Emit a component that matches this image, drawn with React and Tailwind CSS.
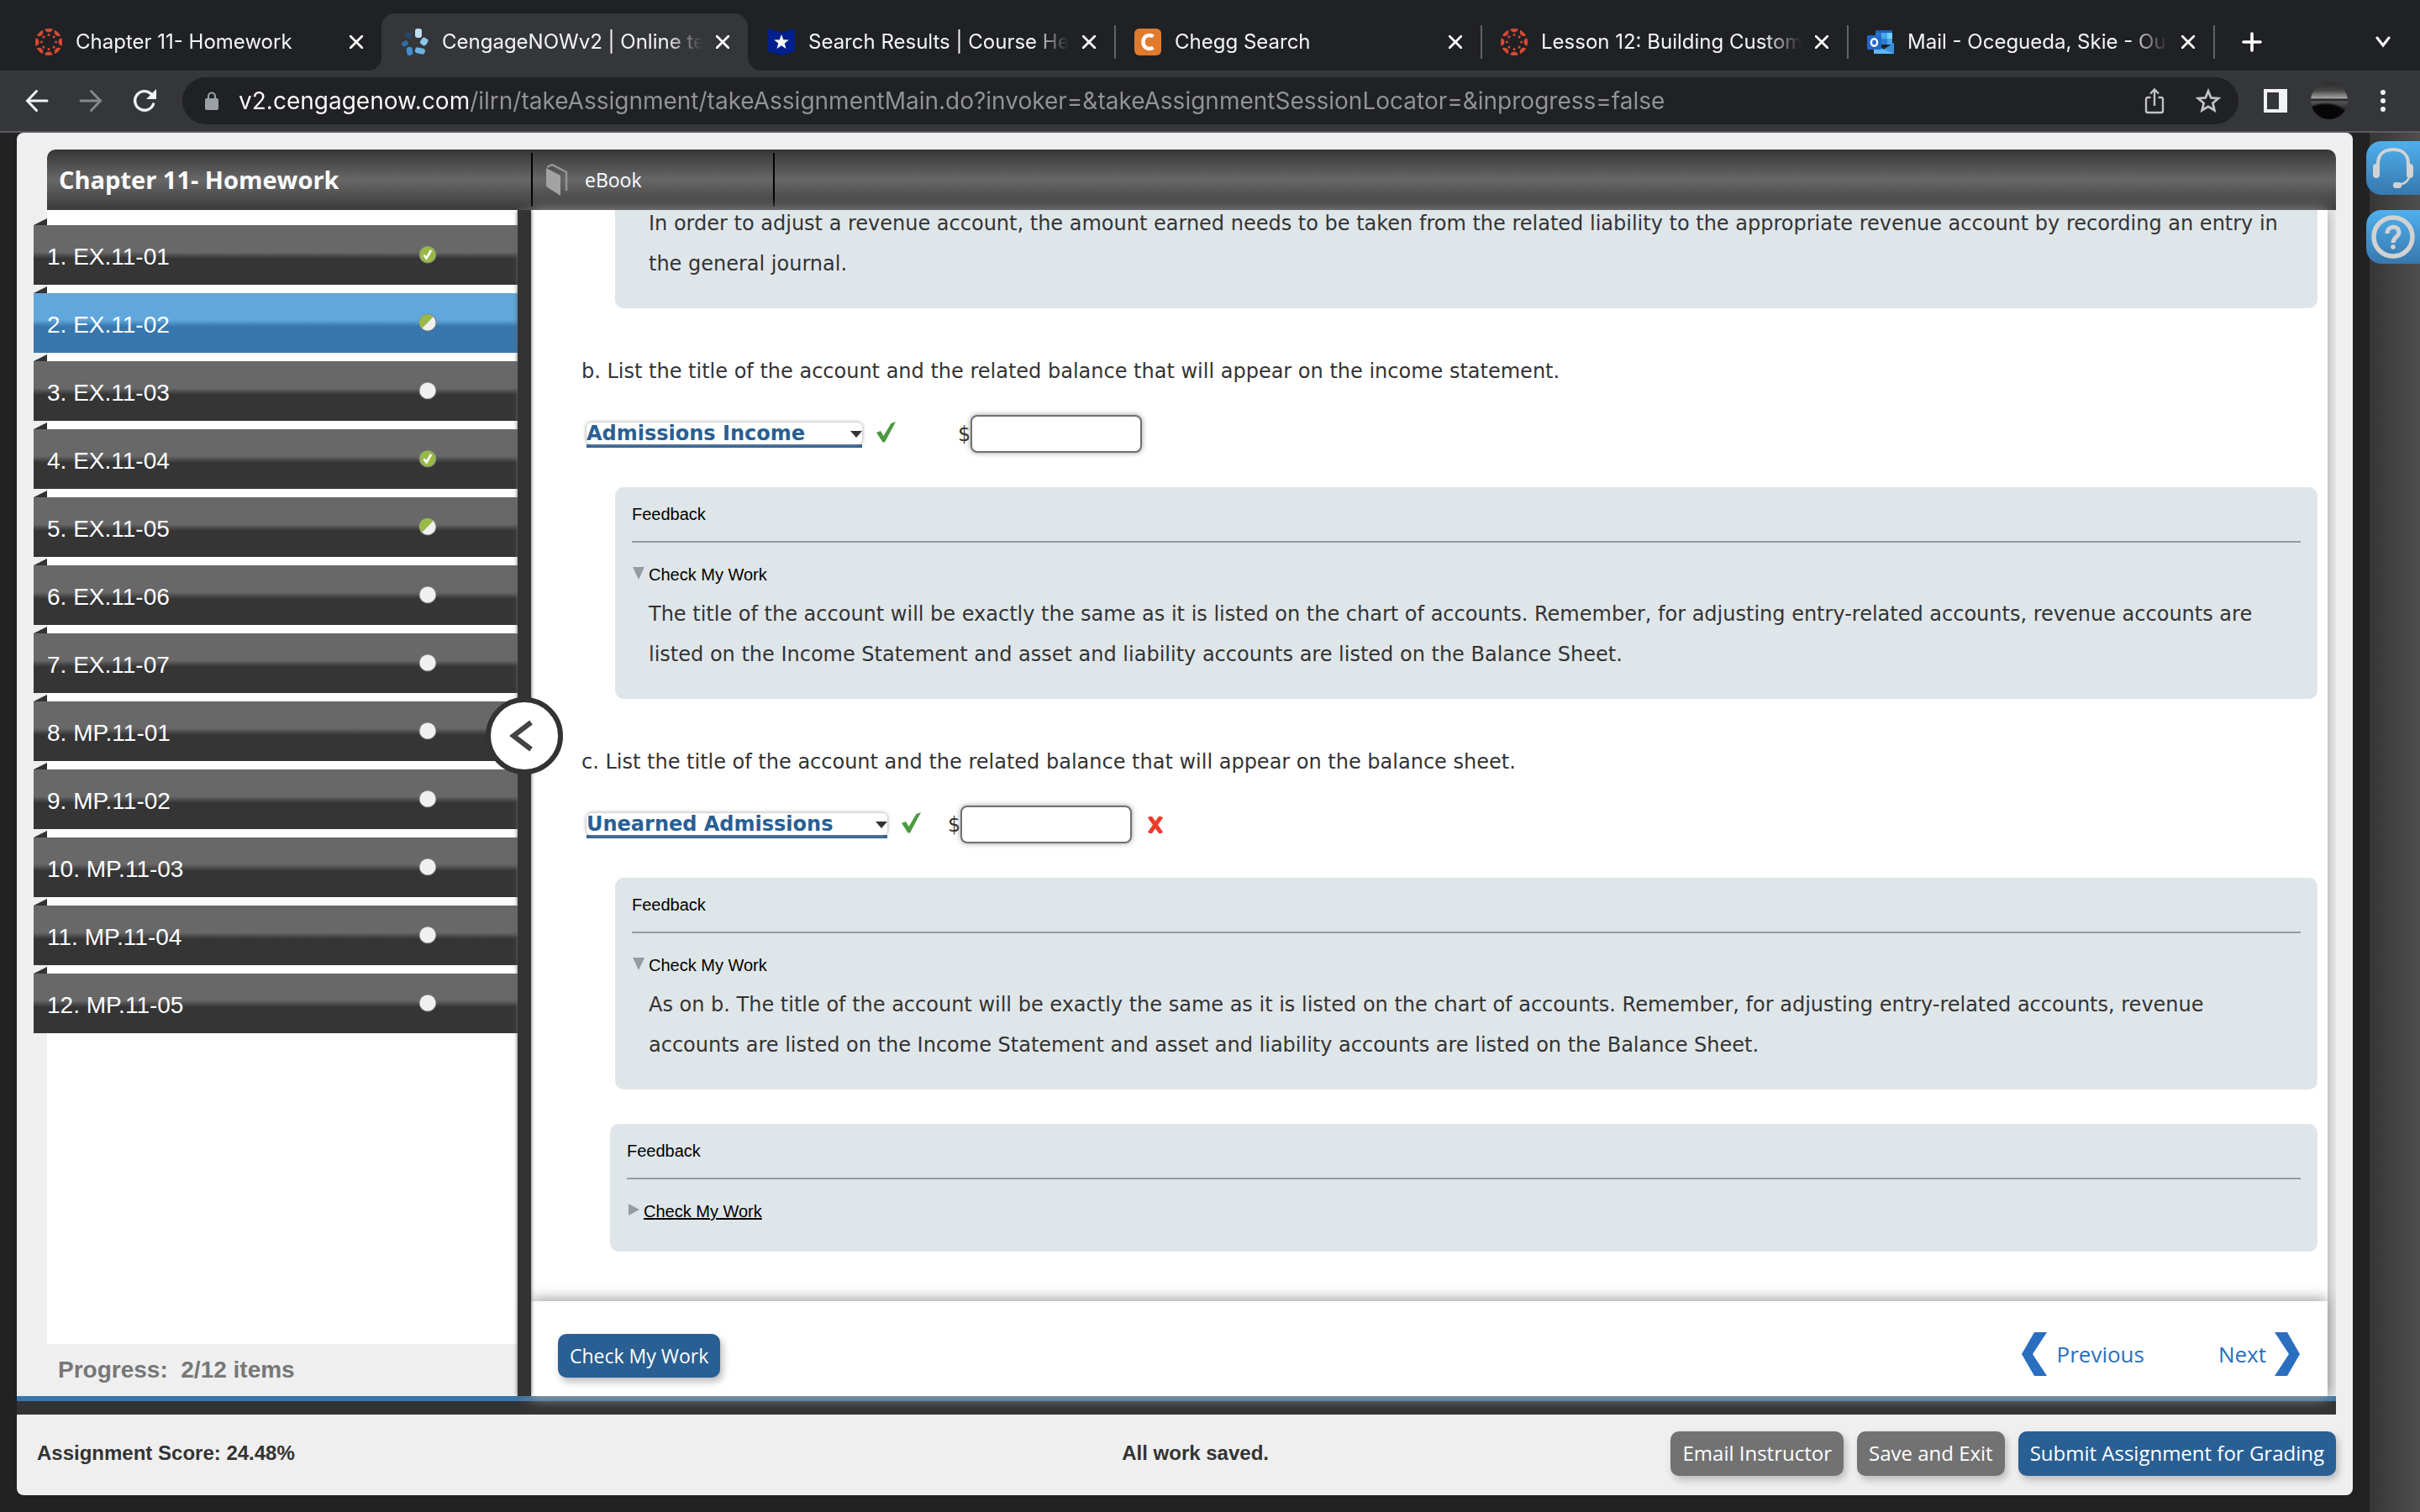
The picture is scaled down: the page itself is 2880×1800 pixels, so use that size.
import React from "react"
import clsx from "clsx"

const tabs = [
  { title: "Chapter 11- Homework", icon: "canvas" },
  { title: "CengageNOWv2 | Online te", icon: "cengage", active: true },
  { title: "Search Results | Course He", icon: "hero" },
  { title: "Chegg Search", icon: "chegg", divider: true },
  { title: "Lesson 12: Building Custom", icon: "canvas", divider: true },
  { title: "Mail - Ocegueda, Skie - Ou", icon: "outlook", divider: true },
]

const items = [
  { name: "EX.11-01", status: "done" },
  { name: "EX.11-02", status: "partial", current: true },
  { name: "EX.11-03", status: "none" },
  { name: "EX.11-04", status: "done" },
  { name: "EX.11-05", status: "partial" },
  { name: "EX.11-06", status: "none" },
  { name: "EX.11-07", status: "none" },
  { name: "MP.11-01", status: "none" },
  { name: "MP.11-02", status: "none" },
  { name: "MP.11-03", status: "none" },
  { name: "MP.11-04", status: "none" },
  { name: "MP.11-05", status: "none" },
]

const angles = [0, 45, 90, 135, 180, 225, 270, 315]

const CanvasIcon = () => (
  <svg viewBox="0 0 32 32" className="size-8" fill="#d64a35">
    <clipPath id="canvas-round">
      <circle cx="16" cy="16" r="16" />
    </clipPath>
    {angles.map((a) => (
      <g key={a} transform={`rotate(${a} 16 16)`}>
        <circle cx="16" cy="-0.5" r="5" clipPath="url(#canvas-round)" />
        <circle cx="16" cy="7.4" r="1.5" />
      </g>
    ))}
  </svg>
)

const CengageIcon = () => (
  <svg viewBox="0 0 32 32" className="size-8">
    <rect x="16" y="0" width="8" height="11" rx="3" fill="#bfe0f2" />
    <rect x="23" y="11" width="8" height="9" rx="3" fill="#8cc6e8" transform="rotate(35 27 15)" />
    <rect x="16" y="23" width="12" height="7" rx="3" fill="#69b3e0" transform="rotate(12 22 26)" />
    <rect x="6" y="22" width="7" height="10" rx="3" fill="#3f8fcf" transform="rotate(-8 9 27)" />
    <rect x="0" y="15" width="8" height="6" rx="3" fill="#2f6ca8" transform="rotate(-35 4 18)" />
    <rect x="5" y="5" width="7" height="6" rx="2" fill="#27476e" transform="rotate(20 8 8)" />
  </svg>
)

const HeroIcon = () => (
  <svg viewBox="0 0 32 32" className="size-8">
    <path d="M0 0l16 5L32 0v27l-16 5-16-5z" fill="#00208f" />
    <path d="M16 7l2.3 6.2 6.5.3-5.1 4.1 1.8 6.4-5.500-3.7-5.500 3.7 1.8-6.4-5.1-4.1 6.500-.3z" fill="#fff" />
  </svg>
)

const CheggIcon = () => (
  <svg viewBox="0 0 32 32" className="size-8">
    <rect width="32" height="32" rx="6" fill="#e07a2d" />
    <path d="M22.500 9.500c-5-3.500-12-0.500-12 6.500s7 10 12 6.500" fill="none" stroke="#fff" strokeWidth="4.500" />
  </svg>
)

const OutlookIcon = () => (
  <svg viewBox="0 0 32 32" className="size-8">
    <rect x="10" y="2" width="20" height="17" fill="#1b60b8" />
    <rect x="10" y="5" width="7" height="7" fill="#2a74c9" />
    <rect x="17" y="5" width="7" height="7" fill="#4aa6ea" />
    <rect x="24" y="5" width="6" height="7" fill="#6fd0ff" />
    <rect x="17" y="12" width="7" height="7" fill="#2b7fd3" />
    <rect x="24" y="12" width="6" height="7" fill="#4aa6ea" />
    <path d="M8 17l12 8 12-8v13H8z" fill="#5db7f0" />
    <path d="M32 17v13L20 24.500z" fill="#3b8edb" />
    <rect y="8" width="17" height="17" rx="1.500" fill="#2468c8" />
    <ellipse cx="8.500" cy="16.500" rx="3.600" ry="4.200" fill="none" stroke="#fff" strokeWidth="2.400" />
  </svg>
)

const tabIcons = {
  canvas: CanvasIcon,
  cengage: CengageIcon,
  hero: HeroIcon,
  chegg: CheggIcon,
  outlook: OutlookIcon,
}

const CloseIcon = () => (
  <svg viewBox="0 0 16 16" className="size-4" stroke="#fff" strokeWidth="2.800" strokeLinecap="round">
    <path d="M1 1l14 14M15 1L1 15" />
  </svg>
)

const Tab = ({ tab }) => {
  const Icon = tabIcons[tab.icon]
  return (
    <div
      className={clsx(
        "relative flex h-17 w-[436px] shrink-0 items-center pl-6",
        tab.active && "rounded-t-2xl bg-[#35363a]"
      )}
    >
      {tab.divider && <span className="absolute left-0 h-10 w-0.5 bg-[#5f6368]" />}
      {tab.active && (
        <>
          <span className="absolute bottom-0 -left-4 size-4 bg-[radial-gradient(circle_at_0_0,#202124_16px,#35363a_16px)]" />
          <span className="absolute -right-4 bottom-0 size-4 bg-[radial-gradient(circle_at_100%_0,#202124_16px,#35363a_16px)]" />
        </>
      )}
      <Icon />
      <span className="ml-4 w-[310px] mask-r-from-86% mask-r-to-100% text-2xl whitespace-nowrap text-[#f4f5f6]">
        {tab.title}
      </span>
      <button aria-label="Close tab" className="ml-4">
        <CloseIcon />
      </button>
    </div>
  )
}

const BrowserBar = () => (
  <header className="bg-[#202124] font-[Inter,sans-serif]">
    <div className="flex items-center pt-4 pr-[34px] pl-[18px]">
      {tabs.map((tab) => (
        <Tab key={tab.title} tab={tab} />
      ))}
      <span className="h-10 w-0.5 bg-[#5f6368]" />
      <button aria-label="New tab" className="ml-8">
        <svg viewBox="0 0 24 24" className="size-6" stroke="#fff" strokeWidth="3.600" strokeLinecap="round">
          <path d="M12 2v20M2 12h20" />
        </svg>
      </button>
      <button aria-label="Search tabs" className="ml-auto">
        <svg viewBox="0 0 20 14" className="h-3.5 w-5" fill="none" stroke="#fff" strokeWidth="3" strokeLinecap="round">
          <path d="M3 2l7 9 7-9" />
        </svg>
      </button>
    </div>
    <div className="flex h-[74px] items-center border-b-2 border-[#5b5c60] bg-[#35363a] pr-7 pl-3">
      <button aria-label="Back" className="flex w-16 justify-center">
        <svg viewBox="0 0 28 28" className="size-7" fill="none" stroke="#f1f3f4" strokeWidth="3" strokeLinecap="round">
          <path d="M26 14H3M13.500 2.500L2.500 14l11 11.500" />
        </svg>
      </button>
      <button aria-label="Forward" className="flex w-16 justify-center">
        <svg viewBox="0 0 28 28" className="size-7" fill="none" stroke="#86878a" strokeWidth="3" strokeLinecap="round">
          <path d="M2 14h23M14.500 2.500L25.500 14l-11 11.500" />
        </svg>
      </button>
      <button aria-label="Reload" className="flex w-16 justify-center">
        <svg viewBox="0 0 28 28" className="size-7" fill="none" stroke="#f1f3f4" strokeWidth="3.400" strokeLinecap="round">
          <path d="M24.500 18A11.300 11.300 0 1 1 22 6" />
          <path d="M28 0v12H16z" fill="#f1f3f4" stroke="none" />
        </svg>
      </button>
      <div className="ml-[13px] flex h-14 flex-1 items-center gap-6 rounded-full bg-[#202124] pr-5 pl-[27px]">
        <svg viewBox="0 0 16 22" className="h-[22px] w-4">
          <rect y="8" width="16" height="14" rx="2" fill="#9aa0a6" />
          <path d="M4 9V5.500a4 4 0 0 1 8 0V9" fill="none" stroke="#9aa0a6" strokeWidth="2.200" />
        </svg>
        <input
          aria-label="Address"
          defaultValue="v2.cengagenow.com/ilrn/takeAssignment/takeAssignmentMain.do?invoker=&takeAssignmentSessionLocator=&inprogress=false"
          className="h-12 flex-1 bg-[linear-gradient(to_right,#ffffff_274px,#929497_274px)] bg-clip-text text-[28px] text-transparent outline-none"
        />
        <button aria-label="Share" className="flex w-8 justify-center">
          <svg viewBox="0 0 24 32" className="h-8 w-6" fill="none" stroke="#c0c1c3" strokeWidth="2.400">
            <path d="M7.500 12H4a2 2 0 0 0-2 2v14a2 2 0 0 0 2 2h16a2 2 0 0 0 2-2V14a2 2 0 0 0-2-2h-3.500M12 22V3M7 7.500L12 2.500l5 5" />
          </svg>
        </button>
        <button aria-label="Bookmark" className="ml-2 flex w-8 justify-center">
          <svg viewBox="0 0 32 32" className="size-8" fill="none" stroke="#c0c1c3" strokeWidth="2.800">
            <path d="M16 4.500l3.300 8 8.700.7-6.600 5.600 2 8.500-7.400-4.500-7.400 4.500 2-8.500L4 13.200l8.700-.7z" />
          </svg>
        </button>
      </div>
      <button aria-label="Side panel" className="ml-[30px]">
        <svg viewBox="0 0 28 28" className="size-7">
          <path d="M0 0h28v28H0zM4 4v20h14V4z" fill="#f1f3f4" fillRule="evenodd" />
        </svg>
      </button>
      <button
        aria-label="Profile"
        className="ml-7 size-11 rounded-full bg-[radial-gradient(30px_20px_at_40%_100%,#060606_85%,transparent_100%),linear-gradient(to_bottom,#2b2b2b_0%,#444444_22%,#a0a0a0_42%,#1a1a1a_47%,#555555_52%,#2a2a2a_72%,#0a0a0a_100%)]"
      />
      <button aria-label="Menu" className="ml-6.5 flex w-8 justify-center">
        <svg viewBox="0 0 8 28" className="h-7 w-2" fill="#f1f3f4">
          <circle cx="4" cy="4" r="3" />
          <circle cx="4" cy="14" r="3" />
          <circle cx="4" cy="24" r="3" />
        </svg>
      </button>
    </div>
  </header>
)

const StatusDot = ({ status }) => (
  <svg viewBox="0 0 22 22" className="size-[22px]">
    <circle cx="11" cy="11" r="10.500" fill="#7d7d7d" />
    <circle cx="11" cy="11" r="9.500" fill={status === "done" ? "#98b94a" : "#f0f0f0"} />
    {status === "done" && (
      <path d="M6.500 11.500l3 4L15 6" fill="none" stroke="#fff" strokeWidth="2.600" />
    )}
    {status === "partial" && <path d="M17.700 4.300A9.500 9.500 0 1 0 4.300 17.700z" fill="#98b94a" />}
  </svg>
)

const Sidebar = () => (
  <aside className="flex w-[596px] shrink-0 flex-col pl-5">
    <nav className="ml-4 flex-1 bg-white pt-[18px]">
      <ul className="flex flex-col gap-2.5">
        {items.map((item, i) => (
          <li key={item.name} className="relative -ml-4">
            <span className="absolute -top-2 left-0 h-2 w-4 bg-[#333333] [clip-path:polygon(100%_0,100%_100%,0_100%)]" />
            <a
              href="#"
              className={clsx(
                "flex h-[71px] items-center justify-between pr-24 pb-0.5 pl-4 text-[28px] text-white",
                item.current
                  ? "bg-[linear-gradient(to_bottom,#60a7dc_45%,#3777ad_56%)]"
                  : "bg-[linear-gradient(to_bottom,#686868_45%,#353535_56%)]"
              )}
            >
              <span className="pt-1.5">
                {i + 1}. {item.name}
              </span>
              <StatusDot status={item.status} />
            </a>
          </li>
        ))}
      </ul>
    </nav>
    <p className="flex h-[62px] items-center pl-[29px] text-[28px] font-bold whitespace-pre text-[#777777]">
      Progress:  2/12 items
    </p>
  </aside>
)

const CheckMark = () => (
  <svg viewBox="0 0 24 26" className="h-[26px] w-6 shrink-0">
    <path d="M1 13l5-2 3.500 6L18.500 2 24 0 11 24.500H8.500z" fill="#4b9a3f" />
  </svg>
)

const AnswerRow = ({ label, account, selectClass, amountClass, wrong }) => (
  <div className="mt-7 ml-[66px] flex h-[45px] items-center">
    <div className={clsx("relative mt-0.5 border-b-4 border-[#2f5f93]", selectClass)}>
      <select
        aria-label={`${label} account title`}
        className="block h-[26px] w-full appearance-none rounded-md bg-white text-[24px] leading-[26px] font-bold text-[#295f93] shadow-[0_0_5px_#999999]"
      >
        <option>{account}</option>
      </select>
      <svg viewBox="0 0 14 8" className="pointer-events-none absolute top-2.5 right-0 h-2 w-3.5" fill="#333333">
        <path d="M0 0h14L7 8z" />
      </svg>
    </div>
    <span className="ml-4 pb-1">
      <CheckMark />
    </span>
    <label className={clsx("flex items-center", amountClass)}>
      $
      <input
        aria-label={`${label} amount`}
        className="h-[45px] w-[204px] rounded-lg border-2 border-[#707070] bg-white px-2 shadow-[0_0_6px_#999999] outline-none"
      />
    </label>
    {wrong && (
      <svg viewBox="0 0 20 20" className="ml-[18px] size-5" stroke="#ee3a2c" strokeWidth="5">
        <path d="M3 0l14 20M17 0L3 20" />
      </svg>
    )}
  </div>
)

const Feedback = ({ className, children }) => (
  <section
    className={clsx(
      "mt-[41px] mr-3 rounded-[10px] bg-[#dfe6e9] px-5 pt-5 font-['Liberation_Sans',Arial,sans-serif] text-[20px] leading-6 text-black",
      className
    )}
  >
    <h3>Feedback</h3>
    <hr className="mt-5 border-t-2 border-[#969ba0]" />
    <button className="mt-[26px] flex items-center">
      <svg viewBox="0 0 16 16" className="mr-1 mb-1 size-4" fill="#969b9f">
        <path d={children ? "M1 1h14L8 16z" : "M2 1l13 7-13 7z"} />
      </svg>
      <span className={children ? "" : "underline"}>Check My Work</span>
    </button>
    {children && (
      <p className="mt-[11px] pl-5 font-['DejaVu_Sans',Verdana,sans-serif] text-[24px] leading-[48px] text-[#333333]">
        {children}
      </p>
    )}
  </section>
)

const Question = ({ children }) => <p className="mt-[51px] ml-[60px] leading-[48px]">{children}</p>

const Assignment = () => (
  <main className="relative flex min-w-0 flex-1 flex-col bg-white font-['DejaVu_Sans',Verdana,sans-serif] text-[24px] text-[#333333] shadow-[0_0_16px_#999999]">
    <div className="min-h-0 flex-1 basis-0 overflow-hidden">
      <div className="-mt-10 mr-3 ml-[100px] rounded-[10px] bg-[#dfe6e9] pt-8 pr-5 pb-[29px] pl-10 leading-[48px]">
        In order to adjust a revenue account, the amount earned needs to be taken from the related liability to the
        appropriate revenue account by recording an entry in the general journal.
      </div>
      <Question>
        b. List the title of the account and the related balance that will appear on the income statement.
      </Question>
      <AnswerRow label="Part b" account="Admissions Income" selectClass="w-[328px]" amountClass="ml-[74px]" />
      <Feedback className="ml-[100px] pb-[29px]">
        The title of the account will be exactly the same as it is listed on the chart of accounts. Remember, for
        adjusting entry-related accounts, revenue accounts are listed on the Income Statement and asset and liability
        accounts are listed on the Balance Sheet.
      </Feedback>
      <Question>
        c. List the title of the account and the related balance that will appear on the balance sheet.
      </Question>
      <AnswerRow label="Part c" account="Unearned Admissions" selectClass="w-[358px]" amountClass="ml-8" wrong />
      <Feedback className="ml-[100px] pb-[29px]">
        As on b. The title of the account will be exactly the same as it is listed on the chart of accounts. Remember,
        for adjusting entry-related accounts, revenue accounts are listed on the Income Statement and asset and
        liability accounts are listed on the Balance Sheet.
      </Feedback>
      <Feedback className="ml-[94px] pb-9" />
    </div>
    <div className="relative flex h-[113px] shrink-0 items-start bg-white pt-[39px] pr-[33px] pl-8 font-['Open_Sans',sans-serif] shadow-[0_-2px_16px_#999999]">
      <button className="h-[52px] rounded-[10px] bg-[#295f93] px-3.5 text-[23px] text-white shadow-[3px_5px_8px_#bbbbbb]">
        Check My Work
      </button>
      <div className="ml-auto flex h-12 items-center text-[26px] text-[#2a6ebf]">
        <a href="#" className="flex items-center gap-3">
          <svg viewBox="0 0 30 52" className="h-13 w-[30px]" fill="#2a6ebf">
            <path d="M15 0h15L13 26l17 26H15L0 26z" />
          </svg>
          Previous
        </a>
        <a href="#" className="ml-[88px] flex items-center gap-2.5">
          Next
          <svg viewBox="0 0 30 52" className="h-13 w-[30px]" fill="#2a6ebf">
            <path d="M15 0H0l17 26L0 52h15l15-26z" />
          </svg>
        </a>
      </div>
    </div>
  </main>
)

const HelpRail = () => (
  <div className="flex w-[60px] shrink-0 flex-col gap-[18px] bg-[linear-gradient(to_right,#363636,#4e4e4e)] pt-2.5">
    <button
      aria-label="Support"
      className="-ml-1 flex h-16 items-center rounded-l-[18px] bg-[linear-gradient(to_bottom,#4fb0ee,#3777ad)] pl-2"
    >
      <svg viewBox="0 0 48 50" className="h-[50px] w-12 shrink-0" fill="none" stroke="#d2d2d2">
        <path d="M6 26V20C6 8 14 3 24 3s18 5 18 17v6" strokeWidth="4" />
        <path d="M43 36c-2 6-6 8-12 9" strokeWidth="2.500" />
        <rect x="0" y="20" width="8" height="17" rx="4" fill="#d2d2d2" stroke="none" />
        <rect x="40" y="20" width="8" height="17" rx="4" fill="#d2d2d2" stroke="none" />
        <rect x="24" y="42" width="10" height="7" rx="3" fill="#d2d2d2" stroke="none" />
      </svg>
    </button>
    <button
      aria-label="Help"
      className="-ml-1 flex h-16 items-center rounded-l-[18px] bg-[linear-gradient(to_bottom,#4fb0ee,#3777ad)] pl-1.5"
    >
      <svg viewBox="0 0 52 52" className="size-13 shrink-0" fill="none" stroke="#d2d2d2">
        <circle cx="26" cy="26" r="23" strokeWidth="5.500" />
        <path d="M19 22c0-10 14-10 14-1.500 0 6-7 5.500-7 12.500" strokeWidth="5" />
        <circle cx="26" cy="38" r="2.800" fill="#d2d2d2" stroke="none" />
      </svg>
    </button>
  </div>
)

const TitleBar = () => (
  <div className="ml-9 flex h-[72px] items-center rounded-t-[10px] bg-[linear-gradient(to_bottom,#363636,#676767_50%,#3a3a3a)] text-white">
    <h1 className="w-[576px] pl-3.5 font-['Open_Sans',sans-serif] text-[29px] font-bold">Chapter 11- Homework</h1>
    <button className="flex h-16 w-[290px] items-center border-x-2 border-black pl-4 font-['Open_Sans',sans-serif] text-[23px]">
      <svg viewBox="0 0 28 38" className="mr-[18px] h-[38px] w-7">
        <path d="M0 5l17 9v24L0 27z" fill="#a3a3a3" />
        <path d="M1 4l6-3 17 9v22" fill="none" stroke="#959595" strokeWidth="2.500" />
      </svg>
      eBook
    </button>
  </div>
)

const Footer = () => (
  <footer className="flex h-24 items-center pr-5 pb-1 text-[24px] font-bold text-[#333333]">
    <p className="flex-1 pl-6">Assignment Score: 24.48%</p>
    <p className="w-[196px] text-right whitespace-nowrap">All work saved.</p>
    <div className="flex flex-1 justify-end gap-4 font-['Open_Sans',sans-serif] font-normal text-white">
      <button className="h-[53px] rounded-[10px] bg-[#727272] px-3.5 shadow-[3px_5px_8px_#bbbbbb]">
        Email Instructor
      </button>
      <button className="h-[53px] rounded-[10px] bg-[#727272] px-3.5 shadow-[3px_5px_8px_#bbbbbb]">
        Save and Exit
      </button>
      <button className="h-[53px] rounded-[10px] bg-[#295f93] px-3.5 shadow-[3px_5px_8px_#bbbbbb]">
        Submit Assignment for Grading
      </button>
    </div>
  </footer>
)

const App = () => {
  return (
    <div className="flex min-h-screen flex-col bg-[#222222] font-['Liberation_Sans',Arial,sans-serif]">
      <BrowserBar />
      <div className="flex flex-1">
        <div className="mb-5 ml-5 flex min-w-0 flex-1 flex-col rounded-lg bg-[#efefef] pt-5">
          <div className="mr-5 flex flex-1 flex-col overflow-hidden">
            <TitleBar />
            <div className="relative flex flex-1 border-b-6 border-[#3777ad]">
              <Sidebar />
              <div className="relative z-10 flex w-4 shrink-0 items-center justify-center bg-[#333333] shadow-[0_0_5px_#666666]">
                <button
                  aria-label="Collapse"
                  className="-mt-40 flex size-[92px] shrink-0 items-center justify-center rounded-full border-6 border-[#333333] bg-white pr-2"
                >
                  <svg viewBox="0 0 28 38" className="h-[38px] w-7" fill="none" stroke="#444444" strokeWidth="6">
                    <path d="M26 3L5 19l21 16" />
                  </svg>
                </button>
              </div>
              <Assignment />
              <div className="w-2.5 shrink-0" />
            </div>
            <div className="h-4 bg-[#333333]" />
          </div>
          <Footer />
        </div>
        <div className="w-5" />
        <HelpRail />
      </div>
    </div>
  )
}

export default App
